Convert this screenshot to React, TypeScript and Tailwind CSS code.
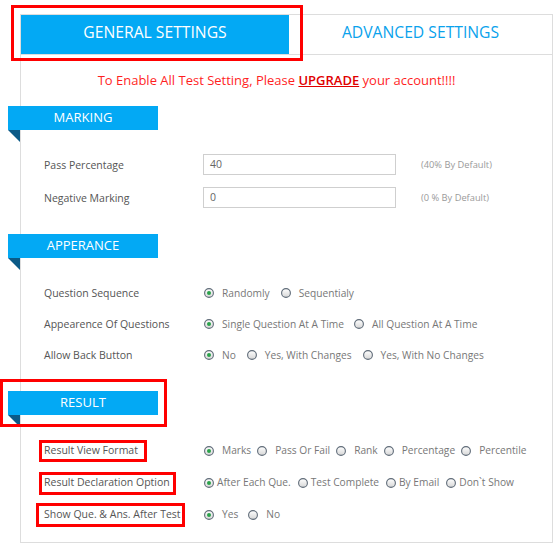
import React from "react";

type Opt = { label: string; checked?: boolean };

function Radio({ checked }: { checked?: boolean }) {
  return (
    <svg width="10" height="10" viewBox="0 0 10 10" className="shrink-0">
      <defs>
        <linearGradient id="rg" x1="0" y1="0" x2="0" y2="1">
          <stop offset="0" stopColor="#ffffff" />
          <stop offset="1" stopColor="#d6d6d6" />
        </linearGradient>
      </defs>
      <circle cx="5" cy="5" r="4.4" fill="url(#rg)" stroke="#5f6b78" strokeWidth="1.1" />
      {checked && <circle cx="5" cy="5" r="2" fill="#2aa24a" />}
    </svg>
  );
}

function Banner({ title }: { title: string }) {
  return (
    <div className="relative -ml-[13px] flex h-[24px] w-[150px] items-center justify-center bg-[#03a9f4] text-[13px] font-medium text-white">
      {title}
      <span className="absolute left-0 top-full h-0 w-0 border-l-[12px] border-t-[12px] border-l-transparent border-t-[#0b5a87]" />
    </div>
  );
}

function RadioRow({
  label,
  options,
  textGap,
  itemGap,
  rowH,
}: {
  label: string;
  options: Opt[];
  textGap: string;
  itemGap: string;
  rowH: string;
}) {
  return (
    <div className={`flex items-center ${rowH}`}>
      <div className="w-[183px] shrink-0 pl-[23px] text-[10.5px] text-[#555]">{label}</div>
      <div className="flex items-center">
        {options.map((o, i) => (
          <div key={i} className={`flex items-center ${i < options.length - 1 ? itemGap : ""}`}>
            <Radio checked={o.checked} />
            <span className={`${textGap} text-[10.2px] text-[#777]`}>{o.label}</span>
          </div>
        ))}
      </div>
    </div>
  );
}

function InputRow({ label, value, hint }: { label: string; value: string; hint: string }) {
  return (
    <div className="flex h-[33px] items-center">
      <div className="w-[182px] shrink-0 pl-[23px] pt-[2px] text-[10.5px] text-[#555]">{label}</div>
      <div className="flex h-[21px] w-[193px] items-center border border-[#cfcfcf] bg-white px-[6px] text-[10.5px] text-[#666]">
        {value}
      </div>
      <div className="ml-[25px] pt-[1px] text-[9.3px] text-[#9a9a9a]">{hint}</div>
    </div>
  );
}

export default function App() {
  return (
    <div className="relative h-[548px] w-[560px] overflow-hidden bg-white font-['Open_Sans',sans-serif]">
      <div className="ml-[20px] mt-[14px] h-[529px] w-[533px] border border-[#dddddd]">
        {/* Tabs */}
        <div className="flex h-[40px] border-b border-[#dddddd]">
          <div className="flex w-[268px] items-center justify-center bg-[#03a9f4] pb-[4px] text-[15.7px] text-white">
            GENERAL SETTINGS
          </div>
          <div className="flex flex-1 items-center justify-center pb-[4px] text-[15.7px] text-[#0aa2ec]">
            ADVANCED SETTINGS
          </div>
        </div>

        {/* Notice */}
        <div className="flex h-[48px] items-center justify-center pr-[20px] pt-[4px] text-[13px] text-[#ff1f1f]">
          <span>
            To Enable All Test Setting, Please{" "}
            <span className="font-semibold text-[#e00000] underline">UPGRADE</span> your account!!!!
          </span>
        </div>

        {/* Marking */}
        <div className="mt-[3px]">
          <Banner title="MARKING" />
        </div>
        <div className="mt-[18px]">
          <InputRow label="Pass Percentage" value="40" hint="(40% By Default)" />
          <InputRow label="Negative Marking" value="0" hint="(0 % By Default)" />
        </div>

        {/* Appearance */}
        <div className="mt-[20px]">
          <Banner title="APPERANCE" />
        </div>
        <div className="mt-[20px]">
          <RadioRow
            label="Question Sequence"
            rowH="h-[31px]"
            textGap="ml-[8px]"
            itemGap="mr-[11px]"
            options={[{ label: "Randomly", checked: true }, { label: "Sequentialy" }]}
          />
          <RadioRow
            label="Appearence Of Questions"
            rowH="h-[31px]"
            textGap="ml-[8px]"
            itemGap="mr-[10px]"
            options={[{ label: "Single Question At A Time", checked: true }, { label: "All Question At A Time" }]}
          />
          <RadioRow
            label="Allow Back Button"
            rowH="h-[31px]"
            textGap="ml-[8px]"
            itemGap="mr-[11px]"
            options={[
              { label: "No", checked: true },
              { label: "Yes, With Changes" },
              { label: "Yes, With No Changes" },
            ]}
          />
        </div>

        {/* Result */}
        <div className="mt-[20px]">
          <Banner title="RESULT" />
        </div>
        <div className="mt-[20px]">
          <RadioRow
            label="Result View Format"
            rowH="h-[32px]"
            textGap="ml-[8px]"
            itemGap="mr-[6px]"
            options={[
              { label: "Marks", checked: true },
              { label: "Pass Or Fail" },
              { label: "Rank" },
              { label: "Percentage" },
              { label: "Percentile" },
            ]}
          />
          <RadioRow
            label="Result Declaration Option"
            rowH="h-[32px]"
            textGap="ml-[3px]"
            itemGap="mr-[7px]"
            options={[
              { label: "After Each Que.", checked: true },
              { label: "Test Complete" },
              { label: "By Email" },
              { label: "Don`t Show" },
            ]}
          />
          <RadioRow
            label="Show Que. & Ans. After Test"
            rowH="h-[32px]"
            textGap="ml-[8px]"
            itemGap="mr-[10px]"
            options={[{ label: "Yes", checked: true }, { label: "No" }]}
          />
        </div>
      </div>

      {/* Red annotation boxes */}
      <div className="pointer-events-none absolute left-[11px] top-[5px] h-[56px] w-[292px] border-[3px] border-[#ff0000]" />
      <div className="pointer-events-none absolute left-0 top-[379px] h-[48px] w-[167px] border-[3px] border-[#ff0000]" />
      <div className="pointer-events-none absolute left-[39px] top-[440px] h-[22px] w-[108px] border-[3px] border-[#ff0000]" />
      <div className="pointer-events-none absolute left-[39px] top-[472px] h-[23px] w-[137px] border-[3px] border-[#ff0000]" />
      <div className="pointer-events-none absolute left-[36px] top-[503px] h-[24px] w-[149px] border-[3px] border-[#ff0000]" />
    </div>
  );
}
